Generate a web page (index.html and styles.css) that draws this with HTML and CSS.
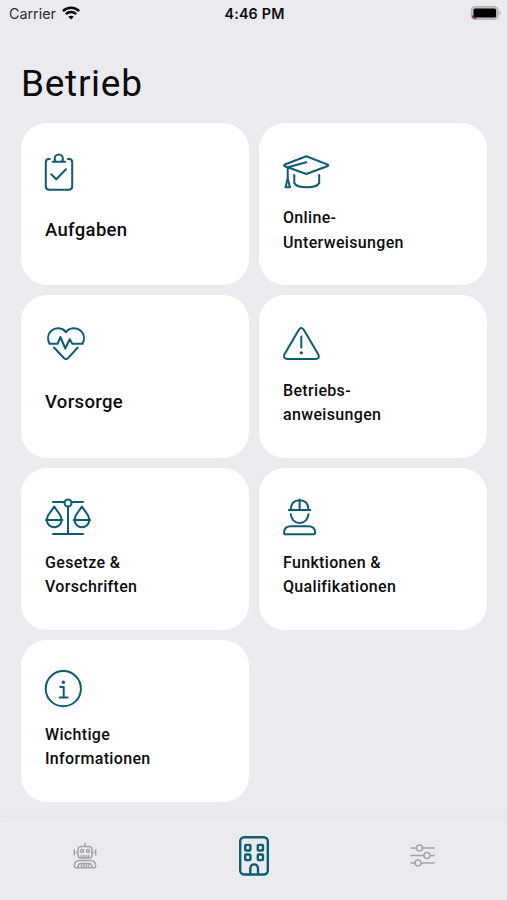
FILE: index.html
```html
<!doctype html>
<html lang="de">
<head>
<meta charset="utf-8">
<title>Betrieb</title>
<link rel="stylesheet" href="styles.css">
</head>

<body>
<div class="status">
	<div class="carrier">
		<span>Carrier</span>
		<svg width="18" height="14" viewBox="0 0 18 14" fill="none" stroke="#08080a" stroke-width="2.5">
			<path d="M.9 5.2C5.4.7 12.6.7 17.1 5.2"/>
			<path d="M3.9 8.2c2.8-2.8 7.4-2.8 10.2 0"/>
			<path d="M9 13.6L6.2 10.8c1.5-1.5 4.1-1.5 5.6 0z" fill="#08080a" stroke="none"/>
		</svg>
	</div>
	<div class="time">4:46 PM</div>
	<div class="battery">
		<svg width="32" height="14" viewBox="0 0 32 14">
			<rect x="1.500" y=".6" width="26.5" height="12.8" rx="4" fill="#c4c4c6" stroke="#b2b2b4" stroke-width="1.4"/>
			<path d="M29.7 5v4.2c1.7-.6 1.7-3.6 0-4.2z" fill="#aaaaac"/>
			<path d="M1.9 9.500v1.300c0 1.3.8 2 2 2h2.4V9.500z" fill="#b0304a"/>
			<rect x="3.500" y="2.400" width="22.600" height="9.200" rx="1.600" fill="#000"/>
		</svg>
	</div>
</div>

<h1>Betrieb</h1>

<div class="cards">
	<div class="card">
		<svg class="icon" viewBox="0 0 48 40">
			<path d="M4.8 6H4Q.8 6 .8 9.300V33.300Q.8 36.700 4.200 36.700H23.800Q27.200 36.700 27.200 33.300V9.300Q27.200 6 24 6H22.900"/>
			<path d="M7.600 8.700H20.200M10.400 8.500C8.500 4.300 10.500 1.400 13.800 1.400S19 4.300 17.200 8.500"/>
			<path d="M6.300 21.300L11.300 26.200L21 16.300"/>
		</svg>
		<div class="label big"><span>Aufgaben</span></div>
	</div>
	<div class="card">
		<svg class="icon" viewBox="0 0 48 40">
			<path d="M1.800 11.500L23.300 3.300L44.800 11.600Q45.800 12.300 44.800 13L23.300 21L1.800 13.300Q.5 12.500 1.800 11.500zM5 14.200L23.300 9.300M4.700 14.500V27"/>
			<path d="M4.700 25.500L2.500 34.300H7L4.700 25.500M11.300 22V30C14 35.700 33.500 35.700 36.200 30V22"/>
		</svg>
		<div class="label"><span>Online-<br>Unterweisungen</span></div>
	</div>
	<div class="card">
		<svg class="icon" viewBox="0 0 48 40">
			<path d="M21 7.300C17.500 2.500 10.500 2 6 6C2.500 9.200 2.300 14.500 4.500 18.800H12.600L15.400 12L20.300 23.500L24.700 14.200L27.300 18.800H37.500C39.700 14.500 39.500 9.200 36 6C31.500 2 24.500 2.500 21 7.300z"/>
			<path d="M9 22.500L18.700 32.800Q21 35.400 23.300 32.800L32.700 22.500"/>
		</svg>
		<div class="label big"><span>Vorsorge</span></div>
	</div>
	<div class="card">
		<svg class="icon" viewBox="0 0 48 40">
			<path d="M16 4.500Q18.300 1.400 20.600 4.500L35.200 29.200Q37.300 33.600 33.100 33.900H4.200Q-.4 33.600 1.500 29.200zM18.300 11.500V22.500"/>
			<circle class="dot" cx="18.300" cy="27.800" r="1.600"/>
		</svg>
		<div class="label"><span>Betriebs-<br>anweisungen</span></div>
	</div>
	<div class="card">
		<svg class="icon" viewBox="0 0 48 40">
			<path d="M8 4H19.500M26.500 4H38M23 8.500V36M8 36H38"/>
			<circle cx="23" cy="5" r="3.500"/>
			<path d="M9.200 8.500L3 17.500C-3.200 33 21.600 33 15.400 17.500zM.9 22H17.500"/>
			<path d="M36.900 8.500L30.700 17.500C24.500 33 49.300 33 43.100 17.500zM28.600 22H45.200"/>
		</svg>
		<div class="label"><span>Gesetze &amp;<br>Vorschriften</span></div>
	</div>
	<div class="card">
		<svg class="icon" viewBox="0 0 48 40">
			<path d="M5.800 12H27.300M7.700 11.500C8 5 11.500 2.200 16.600 2.200S25.200 5 25.500 11.500M16.600 1.400V11.500"/>
			<path d="M7.700 16.200C8.500 22 12 25 16.600 25S24.700 22 25.500 16.200"/>
			<path d="M2.400 36.300Q.9 36.300 1 34.500C1.200 30.500 4 28.300 8 28.300H25.300C29.300 28.300 32 30.500 32.200 34.500Q32.200 36.300 30.800 36.300z"/>
		</svg>
		<div class="label"><span>Funktionen &amp;<br>Qualifikationen</span></div>
	</div>
	<div class="card">
		<svg class="icon" viewBox="0 0 48 40">
			<circle cx="18.300" cy="18.700" r="17.600"/>
			<circle class="dot" cx="18.400" cy="12.300" r="1.700"/>
			<path d="M15.300 17H18.700V27.500M14.600 27.500H22.600"/>
		</svg>
		<div class="label"><span>Wichtige<br>Informationen</span></div>
	</div>
</div>

<div class="tabbar">
	<div class="tab">
		<svg width="24" height="26" viewBox="0 0 24 26">
			<path d="M12 0V3.500M1.300 7V12M22.700 7V12M3.200 9.500H4.500M19.500 9.500H20.800"/>
			<rect x="5" y="3.500" width="14" height="11.500" rx="3"/>
			<circle cx="9" cy="8" r="1.500"/>
			<circle cx="15" cy="8" r="1.500"/>
			<path d="M8.500 14.500V12.500M10.800 12.500V14.500M13.200 12.500V14.500M15.500 12.500V14.500"/>
			<path d="M3 24.800Q1.300 24.800 1.300 23C1.300 19.500 3.500 17.500 6.500 17.500H17.500C20.500 17.500 22.700 19.500 22.700 23Q22.700 24.800 21 24.800z"/>
			<path d="M5 24.500Q5 20.500 8 20.500H16Q19 20.500 19 24.500M8.500 21V24.500M10.800 21V24.500M13.200 21V24.500M15.500 21V24.500"/>
		</svg>
	</div>
	<div class="tab active">
		<svg width="30" height="40" viewBox="0 0 30 40">
			<rect x="1.200" y="1.200" width="27.600" height="37.300" rx="4"/>
			<rect x="6.200" y="8.900" width="5.200" height="5.600" rx="1"/>
			<rect x="18.800" y="8.900" width="5.200" height="5.600" rx="1"/>
			<rect x="6.200" y="18.500" width="5.200" height="5.600" rx="1"/>
			<rect x="18.800" y="18.500" width="5.200" height="5.600" rx="1"/>
			<path d="M11.300 38V32.500C11.300 27 19 27 19 32.500V38"/>
		</svg>
	</div>
	<div class="tab">
		<svg width="26" height="26" viewBox="0 0 26 26">
			<path d="M1 4.900H6.500M12.500 4.900H24.200M1 12.500H14M20 12.500H24.200M1 20.100H5M11 20.100H24.200"/>
			<circle cx="9.500" cy="4.900" r="3"/>
			<circle cx="17" cy="12.500" r="3"/>
			<circle cx="8" cy="20.100" r="3"/>
		</svg>
	</div>
</div>
</body>
</html>
```

FILE: styles.css
```css
* {margin:0; padding:0; box-sizing:border-box;}

body {width:507px; height:900px; overflow:hidden; background:#ebeaef; color:#0c0c0e; font-family:Roboto, "Liberation Sans", sans-serif; display:flex; flex-direction:column;}
svg {display:block; flex:none;}

.status {height:28px; padding:0 5px 2px 9px; display:grid; grid-template-columns:1fr auto 1fr; align-items:center; font-family:Inter, sans-serif; font-size:14.3px;}
.carrier {display:flex; align-items:center; gap:6px; color:#2c2c30;}
.time {font-weight:600; letter-spacing:.2px; padding-right:2px;}
.battery {justify-self:end;}

h1 {height:95.3px; padding:34px 22px 0 21px; font-size:37px; line-height:44px; font-weight:400; letter-spacing:.7px;}

.cards {padding:0 20px 0 21px; display:grid; grid-template-columns:1fr 1fr; grid-auto-rows:162.2px; gap:10px;}
.card {background:#fff; border-radius:26px; padding:30px 24px 0;}
.icon {width:48px; height:40px; overflow:visible; fill:none; stroke:#0b5d70; stroke-width:2; stroke-linecap:round; stroke-linejoin:round;}
.icon .dot {fill:#0b5d70; stroke:none;}
.label {height:49px; margin-top:13px; display:flex; align-items:center; font-size:16px; line-height:24.4px; font-weight:500; letter-spacing:.33px; white-space:nowrap;}
.label.big {margin-top:12px; font-size:18.5px;}

/* bottom navigation */
.tabbar {margin-top:auto; height:82px; padding-bottom:7px; display:flex; align-items:center; background:#ebeaef; box-shadow:0 -1px 4px #dfdfe6;}
.tab {flex:1; display:flex; justify-content:center;}
.tab svg {fill:none; stroke:#a5a5a8; stroke-width:1.5; stroke-linecap:round; stroke-linejoin:round;}
.tab.active svg {stroke:#0b5d70; stroke-width:2.4;}
```
